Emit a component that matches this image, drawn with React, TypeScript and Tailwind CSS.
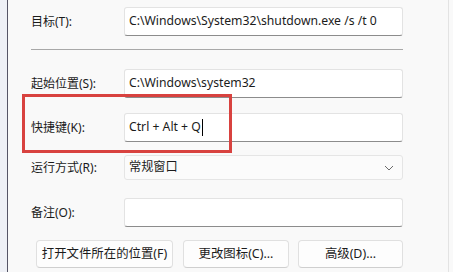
import React from "react";

const font = { fontFamily: '"Noto Sans", "Noto Sans CJK SC", sans-serif' };

function Field({ children, className = "" }: { children?: React.ReactNode; className?: string }) {
  return (
    <div
      className={`w-[279px] bg-white border border-[#e3e3e3] border-b-[#8c8c8c] rounded-[3px] flex items-center pl-[4px] text-[12.2px] text-[#1b1b1b] ${className}`}
    >
      {children}
    </div>
  );
}

function Label({ children }: { children: React.ReactNode }) {
  return <div className="w-[93px] text-[12px] text-[#1b1b1b]">{children}</div>;
}

function Btn({ children, className = "" }: { children: React.ReactNode; className?: string }) {
  return (
    <div
      className={`h-[28px] bg-[#fdfdfd] border border-[#e0e0e0] border-b-[#cfcfcf] rounded-[4px] flex items-center justify-center text-[12.4px] text-[#1b1b1b] ${className}`}
    >
      {children}
    </div>
  );
}

export default function App() {
  return (
    <div className="w-[453px] h-[272px] bg-[#f9f9f9] relative overflow-hidden flex" style={font}>
      <div className="w-[7px] h-full bg-[#eef0f6]" />
      <div className="w-[1px] h-full bg-[#555566]" />
      <div className="flex-1 flex flex-col pl-[23px] pt-[7px]">
        <div className="flex items-center">
          <Label>目标(T):</Label>
          <Field className="h-[29px]">C:\Windows\System32\shutdown.exe /s /t 0</Field>
        </div>
        <div className="w-[372px] h-[1px] bg-[#a8a8a8] mt-[13px]" />
        <div className="flex items-center mt-[19px]">
          <Label>起始位置(S):</Label>
          <Field className="h-[29px]">C:\Windows\system32</Field>
        </div>
        <div className="flex items-center mt-[15px]">
          <Label>快捷键(K):</Label>
          <Field className="h-[29px] border-[#8a8a8a]">
            Ctrl + Alt + Q<span className="inline-block w-[1px] h-[17px] bg-black ml-[1px]" />
          </Field>
        </div>
        <div className="flex items-center mt-[13px]">
          <Label>运行方式(R):</Label>
          <div className="w-[279px] h-[25px] bg-[#fbfbfb] border border-[#e5e5e5] rounded-[3px] flex items-center pl-[4px] pr-[8px] text-[12.2px] text-[#1b1b1b]">
            <span className="flex-1">常规窗口</span>
            <svg width="10" height="6" viewBox="0 0 10 6">
              <path d="M1 1 L5 5 L9 1" fill="none" stroke="#6b6b6b" strokeWidth="1" />
            </svg>
          </div>
        </div>
        <div className="flex items-center mt-[18px]">
          <Label>备注(O):</Label>
          <Field className="h-[29px]" />
        </div>
        <div className="flex items-center mt-[13px] pl-[5px]">
          <Btn className="w-[137px]">打开文件所在的位置(F)</Btn>
          <Btn className="w-[106px] ml-[10px]">更改图标(C)...</Btn>
          <Btn className="w-[105px] ml-[9px]">高级(D)...</Btn>
        </div>
      </div>
      <div className="w-[1px] h-full bg-[#e3e3e3] absolute left-[448px] top-0" />
      <div className="absolute left-[22px] top-[94px] w-[210px] h-[59px] border-[3px] border-[#d8423f]" />
    </div>
  );
}
